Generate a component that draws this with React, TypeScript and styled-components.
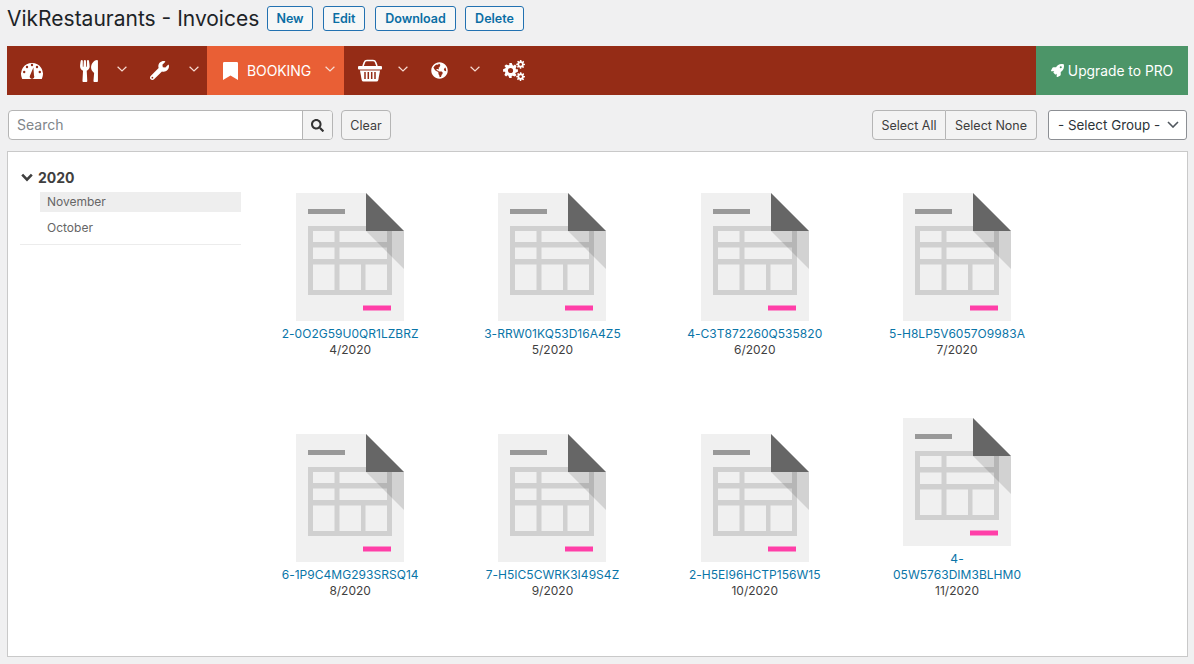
import React from "react";
import styled, { createGlobalStyle } from "styled-components";
import {
  FaGlobeAmericas,
  FaRocket,
  FaSearch,
  FaUtensils,
  FaWrench,
} from "react-icons/fa";

const GlobalStyle = createGlobalStyle`
  html, body {
    margin: 0;
    padding: 0;
    background: #f0f0f1;
    color: #3c434a;
    font-family: Inter, "Noto Sans", "Liberation Sans", sans-serif;
  }
  * { box-sizing: border-box; }
`;

const Page = styled.div`
  width: 1194px;
  height: 664px;
  padding: 0 6px 0 7px;
  overflow: hidden;
`;

const Header = styled.header`
  height: 46px;
  display: flex;
  align-items: flex-start;
`;

const Title = styled.h1`
  margin: 6px 9px 0 0;
  width: 251px;
  font-size: 21px;
  line-height: 26px;
  font-weight: 400;
  color: #1d2327;
  white-space: nowrap;
`;

const ActionButton = styled.button<{ $w: number; $gap?: number }>`
  width: ${(p) => p.$w}px;
  height: 25px;
  margin: 6px ${(p) => p.$gap ?? 10}px 0 0;
  padding: 0;
  background: #f6f7f7;
  border: 1px solid #2271b1;
  border-radius: 3px;
  color: #0a6ea4;
  font: 600 12.5px Inter, sans-serif;
`;

const Menu = styled.nav`
  height: 49px;
  display: flex;
  background: #952c16;
`;

const MenuItem = styled.div<{ $w: number; $active?: boolean; $lead?: number; $tail?: number }>`
  width: ${(p) => p.$w}px;
  display: flex;
  align-items: center;
  padding: 0 ${(p) => p.$tail ?? 9}px 0 ${(p) => p.$lead ?? 14}px;
  color: #fff;
  background: ${(p) => (p.$active ? "#e95f35" : "transparent")};
`;

const MenuLabel = styled.span`
  margin-left: 9px;
  font-size: 14px;
  letter-spacing: -0.1px;
`;

const Caret = styled.svg`
  width: 10px;
  height: 6px;
  margin-left: auto;
  margin-top: -4px;
  fill: none;
  stroke: #f7dcd3;
  stroke-width: 1.2;
`;

const Upgrade = styled.div`
  width: 152px;
  margin-left: auto;
  display: flex;
  align-items: center;
  justify-content: center;
  gap: 4px;
  background: #4c9568;
  color: #fff;
  font-size: 13.8px;
`;

const Toolbar = styled.div`
  height: 56px;
  padding: 15px 1px 0 1px;
  display: flex;
  align-items: flex-start;
`;

const SearchBox = styled.div`
  width: 325px;
  height: 30px;
  display: flex;
  background: #fff;
  border: 1px solid #b5b5b5;
  border-radius: 4px;
`;

const SearchInput = styled.input`
  flex: 1;
  min-width: 0;
  height: 27px;
  border: 0;
  outline: 0;
  padding: 0 8px;
  background: transparent;
  border-radius: 4px;
  font: 14px Inter, sans-serif;
  &::placeholder { color: #80858a; opacity: 1; }
`;

const SearchButton = styled.button`
  width: 30px;
  padding: 0;
  display: flex;
  align-items: center;
  justify-content: center;
  background: #f3f3f3;
  border: 0;
  border-left: 1px solid #b5b5b5;
  border-radius: 0 3px 3px 0;
  color: #333;
  font-size: 13px;
`;

const ToolButton = styled.button<{ $w: number }>`
  width: ${(p) => p.$w}px;
  height: 30px;
  padding: 0;
  background: #f3f3f3;
  border: 1px solid #b5b5b5;
  border-radius: 4px;
  color: #3d3d3d;
  font: 12.5px Inter, sans-serif;
`;

const ClearButton = styled(ToolButton)`
  margin-left: 8px;
`;

const ButtonGroup = styled.div`
  margin-left: auto;
  display: flex;
  ${ToolButton}:first-child { border-radius: 4px 0 0 4px; }
  ${ToolButton}:last-child { border-radius: 0 4px 4px 0; border-left: 0; }
`;

const GroupSelect = styled.div`
  width: 139px;
  height: 30px;
  margin-left: 11px;
  padding: 0 7px 1px 9px;
  display: flex;
  align-items: center;
  justify-content: space-between;
  background: #fff;
  border: 1px solid #8c8f94;
  border-radius: 3px;
  color: #2c3338;
  font-size: 13.4px;
  white-space: nowrap;
`;

const SelectCaret = styled.svg`
  width: 12px;
  height: 7px;
  fill: none;
  stroke: #50575e;
  stroke-width: 1.6;
`;

const Panel = styled.main`
  height: 506px;
  display: flex;
  background: #fff;
  border: 1px solid #c9c9c9;
`;

const Sidebar = styled.aside`
  width: 241px;
  padding: 16px 8px 0 12px;
  flex: none;
`;

const Year = styled.div`
  height: 19px;
  display: flex;
  align-items: center;
  gap: 5px;
  padding-left: 1px;
  font-size: 14px;
  font-weight: 700;
  color: #3f3f3f;
`;

const YearCaret = styled.svg`
  width: 12px;
  height: 9px;
  fill: none;
  stroke: #3f3f3f;
  stroke-width: 2.6;
`;

const Months = styled.ul`
  list-style: none;
  margin: 5px 0 0;
  padding: 0 0 0 20px;
  border-bottom: 1px solid #ececec;
`;

const Month = styled.li<{ $active?: boolean }>`
  height: 20px;
  margin-bottom: 6px;
  padding-left: 7px;
  line-height: 20px;
  font-size: 12px;
  color: #666;
  background: ${(p) => (p.$active ? "#eeeeee" : "transparent")};
`;

const Grid = styled.section`
  width: 810px;
  height: 406px;
  margin-top: 41px;
  display: grid;
  grid-template-columns: repeat(4, 202.3px);
  grid-template-rows: 165px 165px;
  row-gap: 76px;
  align-items: end;
`;

const Invoice = styled.article`
  display: flex;
  flex-direction: column;
  align-items: center;
  text-align: center;
  font-size: 12px;
  line-height: 16px;
`;

const Sheet = styled.svg`
  width: 108px;
  height: 128px;
  margin-bottom: 5px;
  display: block;
`;

const InvoiceLink = styled.a`
  width: 139px;
  color: #0a75a8;
  letter-spacing: 0.03px;
  text-decoration: none;
`;

const InvoiceDate = styled.span`
  color: #3f3f3f;
`;

const Gauge = () => (
  <svg width="22" height="17" viewBox="0 0 22 17">
    <path fill="#fff" d="M1 16.5A11 11 0 1 1 21 16.5Q21 17 20 17H2Q1 17 1 16.5Z" />
    <g fill="#952c16">
      <circle cx="11" cy="3" r="1.2" />
      <circle cx="6" cy="5" r="1.2" />
      <circle cx="16" cy="5" r="1.2" />
      <circle cx="3.2" cy="10" r="1.2" />
      <circle cx="18.8" cy="10" r="1.2" />
      <path d="M12.4 5.5 13 13.5A2.3 2.3 0 1 1 9 13.5Z" />
    </g>
  </svg>
);

const Bookmark = () => (
  <svg width="15" height="18" viewBox="0 0 15 18" fill="#fff">
    <path d="M0 1.2Q0 0 1.2 0H13.8Q15 0 15 1.2V18L7.5 13.4 0 18Z" />
  </svg>
);

const Basket = () => (
  <svg width="24" height="23" viewBox="0 0 24 23" fill="#fff">
    <path d="M5 7 L6.5 3 Q7 1.5 9 1.5 H15 Q17 1.5 17.5 3 L19 7" fill="none" stroke="#fff" strokeWidth="1.6" />
    <rect x="0" y="7" width="24" height="3.4" rx="1" />
    <path d="M2 11.5H22L20.3 21Q20 22.5 18.5 22.5H5.5Q4 22.5 3.7 21Z" />
    <path d="M7 13V20M10.3 13V20M13.7 13V20M17 13V20" stroke="#952c16" strokeWidth="1.5" />
  </svg>
);

// gear outline from alternating tooth and root points
const gearPath = (cx: number, cy: number, outer: number, inner: number, teeth: number) => {
  const pts: string[] = [];
  for (let i = 0; i < teeth; i++) {
    const a = (i / teeth) * Math.PI * 2;
    const step = (Math.PI * 2) / teeth;
    [
      [inner, a - step * 0.5],
      [inner, a - step * 0.27],
      [outer, a - step * 0.2],
      [outer, a + step * 0.2],
    ].forEach(([r, t]) => {
      pts.push(`${(cx + r * Math.cos(t)).toFixed(2)} ${(cy + r * Math.sin(t)).toFixed(2)}`);
    });
  }
  return `M${pts.join("L")}Z`;
};

const ringPath = (cx: number, cy: number, r: number) =>
  `M${cx - r} ${cy}a${r} ${r} 0 1 0 ${r * 2} 0a${r} ${r} 0 1 0 ${-r * 2} 0Z`;

const Cogs = () => (
  <svg width="22" height="21" viewBox="0 0 22 21" fill="#fff" fillRule="evenodd">
    <path d={gearPath(7.5, 10.5, 7.5, 5.6, 8) + ringPath(7.5, 10.5, 2.6)} />
    <path d={gearPath(17.6, 4.4, 4.4, 3.1, 8) + ringPath(17.6, 4.4, 1.4)} />
    <path d={gearPath(17.6, 16.6, 4.4, 3.1, 8) + ringPath(17.6, 16.6, 1.4)} />
  </svg>
);

const MenuCaret = () => (
  <Caret viewBox="0 0 10 6">
    <path d="M.6.8 5 5 9.4.8" />
  </Caret>
);

const InvoiceSheet = () => (
  <Sheet viewBox="0 0 108 128">
    <path d="M0 0H70L108 38V128H0Z" fill="#f0f0f0" />
    <rect x="12" y="16" width="37" height="5" fill="#999" />
    <rect x="12" y="33" width="84" height="69" fill="#d0d0d0" />
    <g fill="#f0f0f0">
      <rect x="17" y="38" width="21.5" height="11" />
      <rect x="43.5" y="38" width="47.5" height="11" />
      <rect x="17" y="54.5" width="21.5" height="11.5" />
      <rect x="43.5" y="54.5" width="47.5" height="11.5" />
      <rect x="17" y="71.5" width="21.5" height="25.5" />
      <rect x="43.5" y="71.5" width="21.5" height="25.5" />
      <rect x="69.5" y="71.5" width="21.5" height="25.5" />
    </g>
    <path d="M70 38H108V76Z" fill="#000" fillOpacity=".12" />
    <path d="M70 0L108 38H70Z" fill="#666" />
    <rect x="67" y="112.5" width="28" height="5" fill="#ff3fa8" />
  </Sheet>
);

const invoices = [
  { id: "2-0O2G59U0QR1LZBRZ", date: "4/2020" },
  { id: "3-RRW01KQ53D16A4Z5", date: "5/2020" },
  { id: "4-C3T872260Q535820", date: "6/2020" },
  { id: "5-H8LP5V6057O9983A", date: "7/2020" },
  { id: "6-1P9C4MG293SRSQ14", date: "8/2020" },
  { id: "7-H5IC5CWRK3I49S4Z", date: "9/2020" },
  { id: "2-H5EI96HCTP156W15", date: "10/2020" },
  { id: "4-05W5763DIM3BLHM0", date: "11/2020" },
];

export default function App() {
  return (
    <Page>
      <GlobalStyle />
      <Header>
        <Title>VikRestaurants - Invoices</Title>
        <ActionButton $w={46}>New</ActionButton>
        <ActionButton $w={42}>Edit</ActionButton>
        <ActionButton $w={81} $gap={9}>Download</ActionButton>
        <ActionButton $w={59}>Delete</ActionButton>
      </Header>

      <Menu>
        <MenuItem $w={57}><Gauge /></MenuItem>
        <MenuItem $w={72}><FaUtensils size={22} /><MenuCaret /></MenuItem>
        <MenuItem $w={71} $tail={8}><FaWrench size={19} /><MenuCaret /></MenuItem>
        <MenuItem $w={137} $active $lead={16}>
          <Bookmark />
          <MenuLabel>BOOKING</MenuLabel>
          <MenuCaret />
        </MenuItem>
        <MenuItem $w={73}><Basket /><MenuCaret /></MenuItem>
        <MenuItem $w={72}><FaGlobeAmericas size={17} /><MenuCaret /></MenuItem>
        <MenuItem $w={50}><Cogs /></MenuItem>
        <Upgrade><FaRocket size={13} /> Upgrade to PRO</Upgrade>
      </Menu>

      <Toolbar>
        <SearchBox>
          <SearchInput placeholder="Search" />
          <SearchButton><FaSearch /></SearchButton>
        </SearchBox>
        <ClearButton $w={50}>Clear</ClearButton>
        <ButtonGroup>
          <ToolButton $w={74}>Select All</ToolButton>
          <ToolButton $w={91}>Select None</ToolButton>
        </ButtonGroup>
        <GroupSelect>
          - Select Group -
          <SelectCaret viewBox="0 0 12 7"><path d="M1 1l5 5 5-5" /></SelectCaret>
        </GroupSelect>
      </Toolbar>

      <Panel>
        <Sidebar>
          <Year>
            <YearCaret viewBox="0 0 12 9"><path d="M1.2 1.6 6 6.6l4.8-5" /></YearCaret>
            2020
          </Year>
          <Months>
            <Month $active>November</Month>
            <Month>October</Month>
          </Months>
        </Sidebar>
        <Grid>
          {invoices.map((inv) => (
            <Invoice key={inv.id}>
              <InvoiceSheet />
              <InvoiceLink href="#">{inv.id}</InvoiceLink>
              <InvoiceDate>{inv.date}</InvoiceDate>
            </Invoice>
          ))}
        </Grid>
      </Panel>
    </Page>
  );
}
